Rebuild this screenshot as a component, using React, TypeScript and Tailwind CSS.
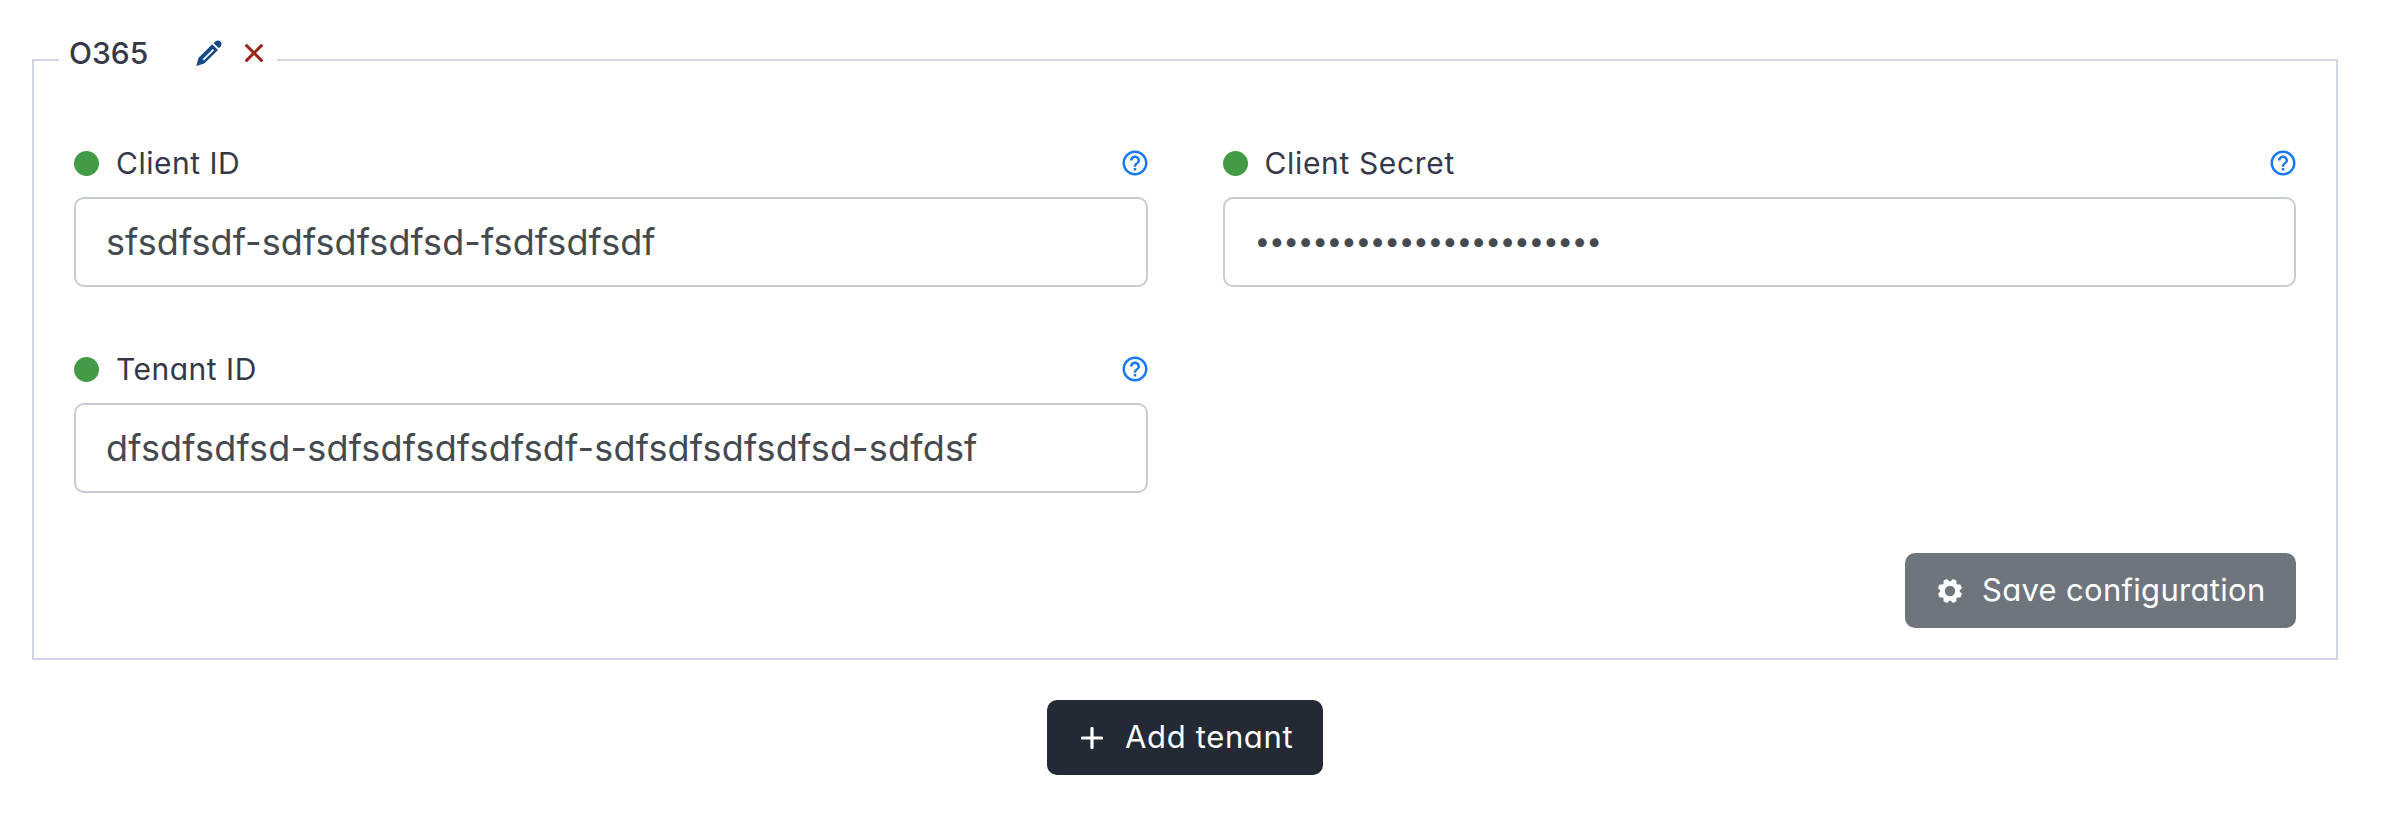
import React from "react";
import { MdHelpOutline } from "react-icons/md";

function PencilIcon() {
  return (
    <svg className="h-[26px] w-[26px]" viewBox="0 0 26 26" fill="#124a86" aria-hidden="true">
      <path
        fillRule="evenodd"
        d="M16.2 4.2L22 10L8.2 23.6L0.4 25.9L2.4 17.9ZM16.9 9.1L6.6 19.3L7.8 20.5L18.1 10.3Z"
      />
      <path d="M17.7 3.2L19.3 1.6C20.9 .1 23.1 .1 24.5 1.5C25.9 2.9 25.9 5.1 24.5 6.5L22.9 8.3Z" />
    </svg>
  );
}

function CrossIcon() {
  return (
    <svg className="h-[18px] w-[18px]" viewBox="0 0 18 18" stroke="#9b2418" strokeWidth="3" strokeLinecap="round" aria-hidden="true">
      <path d="M1.6 1.6L16.4 16.4M16.4 1.6L1.6 16.4" />
    </svg>
  );
}

function GearIcon() {
  return (
    <svg className="h-6 w-6" viewBox="-12 -12 24 24" aria-hidden="true">
      <circle r="7.4" fill="none" stroke="#fff" strokeWidth="4.4" />
      <g fill="#fff">
        {[22.5, 67.5, 112.5, 157.5, 202.5, 247.5, 292.5, 337.5].map((a) => (
          <path key={a} transform={`rotate(${a})`} d="M-3.6 -8L-2.2 -11.5Q-2 -12.2 -1.3 -12.2H1.3Q2 -12.2 2.2 -11.5L3.6 -8Z" />
        ))}
      </g>
    </svg>
  );
}

function PlusIcon() {
  return (
    <svg className="h-[22px] w-[22px]" viewBox="0 0 22 22" stroke="#fff" strokeWidth="3.2" strokeLinecap="round" aria-hidden="true">
      <path d="M11 1.5V20.5M1.5 11H20.5" />
    </svg>
  );
}

function Field({ label, value, labelClass, valueClass }: { label: string; value: string; labelClass: string; valueClass: string }) {
  return (
    <div>
      <div className="flex h-10 items-center">
        <span className="mr-[17px] h-[25px] w-[25px] rounded-full bg-[#439a47]" />
        <span className={`text-[30px] leading-10 text-[#343848] ${labelClass}`}>{label}</span>
        <MdHelpOutline className="-mr-0.5 ml-auto h-[30px] w-[30px] text-[#1877f2]" />
      </div>
      <div className="mt-3.5 flex h-[90px] items-center rounded-[10px] border-2 border-[#c8cdd4] px-[30px]">
        <span className={`whitespace-nowrap text-[#444a50] ${valueClass}`}>{value}</span>
      </div>
    </div>
  );
}

export default function App() {
  return (
    <main className="flex h-[822px] flex-col items-center bg-white pr-[46px] pl-8 pt-9 font-['Inter',sans-serif] [font-feature-settings:'cv11']">
      <fieldset className="w-full border-2 border-[#d0d4e4] px-10 pb-[30px]">
        <legend className="-ml-[15px] flex h-12 w-[218px] items-start pl-2.5">
          <span className="w-[79px] text-[30px] leading-[35px] font-medium text-[#343848]">O365</span>
          <span className="ml-[48px] flex h-[34px] items-center gap-[23px]">
            <PencilIcon />
            <CrossIcon />
          </span>
        </legend>
        <div className="grid grid-cols-2 gap-x-[75px] gap-y-[62px] pt-[59px]">
          <Field label="Client ID" value="sfsdfsdf-sdfsdfsdfsd-fsdfsdfsdf" labelClass="tracking-[0.5px]" valueClass="text-[36px] tracking-[0.08px]" />
          <Field label="Client Secret" value="••••••••••••••••••••••••" labelClass="tracking-[0.65px]" valueClass="text-[28px] leading-8 pb-0.5 tracking-[-1.33px]" />
          <Field label="Tenant ID" value="dfsdfsdfsd-sdfsdfsdfsdfsdf-sdfsdfsdfsdfsd-sdfdsf" labelClass="tracking-[0.5px]" valueClass="text-[36px] tracking-[0.18px]" />
        </div>
        <div className="mt-[60px] flex justify-end">
          <button className="flex h-[75px] w-[391px] items-center rounded-[10px] bg-[#6f757d] pl-[33px] text-white">
            <GearIcon />
            <span className="ml-5 whitespace-nowrap text-[31px] tracking-[0.3px]">Save configuration</span>
          </button>
        </div>
      </fieldset>
      <button className="mt-10 flex h-[75px] w-[276px] items-center rounded-[10px] bg-[#232a35] pl-[34px] text-white">
        <PlusIcon />
        <span className="ml-[22px] whitespace-nowrap text-[31px] tracking-[0.65px]">Add tenant</span>
      </button>
    </main>
  );
}
